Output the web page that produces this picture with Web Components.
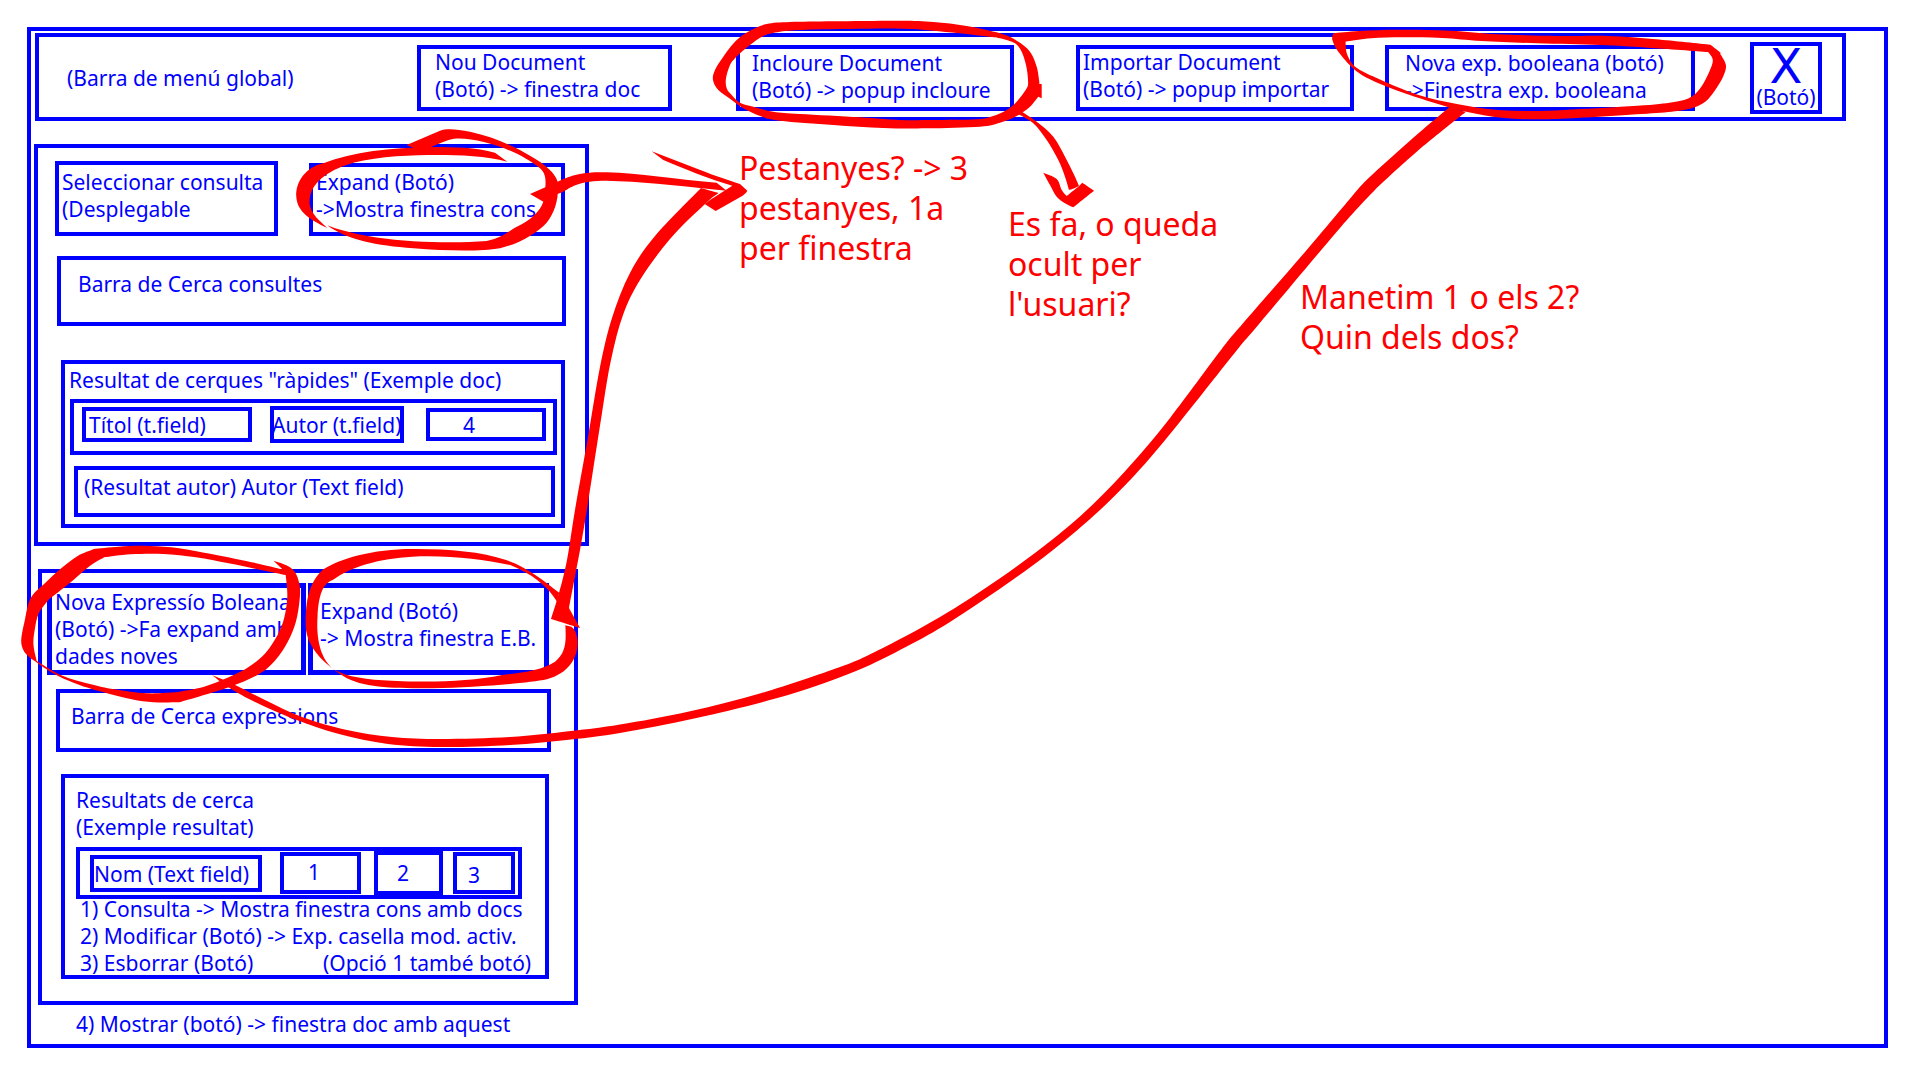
<!DOCTYPE html>
<html lang="ca">
<head>
<meta charset="utf-8">
<title>Esbós de la finestra principal</title>
<style>
  html { background: #fff; }
  body {
    position: relative;
    margin: 0;
    padding: 27px 32px 32px 27px;
    color: #00f;
    font: 21px/27px "Noto Sans", sans-serif;
  }
</style>
</head>
<body>
<wire-window></wire-window>
<ink-layer>
  <ink-note style="left:739px;top:148px">Pestanyes? -&gt; 3<br>pestanyes, 1a<br>per finestra</ink-note>
  <ink-note style="left:1008px;top:204px">Es fa, o queda<br>ocult per<br>l'usuari?</ink-note>
  <ink-note style="left:1300px;top:277px">Manetim 1 o els 2?<br>Quin dels dos?</ink-note>
</ink-layer>

<script>
const define = (name, css, html) => customElements.define(name, class extends HTMLElement {
  constructor() {
    super();
    this.attachShadow({ mode: 'open' }).innerHTML = `<style>*{box-sizing:border-box}${css}</style>${html}`;
  }
});

/* Button drawn as a plain outlined box, label at the top left */
define('wire-button', `
  :host { display: block; box-sizing: border-box; }
  button {
    display: flex; align-items: flex-start; width: 100%; height: 100%; margin: 0;
    padding: var(--pad, 0); border: var(--line, 4px) solid #00f; background: none;
    color: inherit; font: inherit; text-align: left; white-space: nowrap;
  }`,
  `<button type="button"><span><slot></slot></span></button>`);

/* Drop-down whose caption takes two lines */
define('wire-select', `
  :host { display: block; box-sizing: border-box; }
  label { display: block; position: relative; height: 100%; border: 4px solid #00f; padding: var(--pad, 0); white-space: nowrap; }
  select { position: absolute; inset: 0; width: 100%; height: 100%; border: 0; background: none; appearance: none; }`,
  `<label><slot></slot><select><option></option></select></label>`);

/* Text field: its value comes from the "value" attribute */
customElements.define('wire-field', class extends HTMLElement {
  constructor() {
    super();
    this.attachShadow({ mode: 'open' }).innerHTML = `<style>
      :host { display: block; box-sizing: border-box; }
      input {
        display: block; box-sizing: border-box; width: 100%; height: 100%; margin: 0; border: 0;
        padding: var(--pad, 0); outline: 4px solid #00f; outline-offset: -4px;
        background: none; color: inherit; font: inherit;
      }</style><input type="text">`;
    const input = this.shadowRoot.querySelector('input');
    input.value = this.getAttribute('value');
    input.setAttribute('aria-label', this.getAttribute('value'));
  }
});

define('wire-close', `
  :host { display: block; }
  button {
    display: flex; flex-direction: column; align-items: center; width: 100%; height: 100%;
    margin: 0; padding: 3px 0 0; border: 4px solid #00f; background: none; color: inherit; font: inherit; white-space: nowrap;
  }
  .x { font: 48px/35px "DejaVu Sans", sans-serif; }`,
  `<button type="button"><span class="x">X</span><span>(Botó)</span></button>`);

define('menu-bar', `
  :host {
    display: grid; align-items: center; box-sizing: border-box;
    grid-template-columns:
      minmax(0,378fr) minmax(0,255fr) minmax(0,64fr) minmax(0,278fr) minmax(0,62fr) minmax(0,278fr)
      minmax(0,31fr) minmax(0,310fr) minmax(0,55fr) minmax(0,72fr) minmax(0,20fr);
    padding: 5px 0 3px; border: 4px solid #00f;
  }
  .title { padding-left: 28px; white-space: nowrap; }
  wire-button { height: 66px; }
  wire-close { height: 72px; grid-column: 10; }`,
  `<span class="title">(Barra de menú global)</span>
   <wire-button style="grid-column:2;--pad:0 0 0 14px">Nou Document<br>(Botó) -&gt; finestra doc</wire-button>
   <wire-button style="grid-column:4;--pad:1px 0 0 12px">Incloure Document<br>(Botó) -&gt; popup incloure</wire-button>
   <wire-button style="grid-column:6;--pad:0 0 0 3px">Importar Document<br>(Botó) -&gt; popup importar</wire-button>
   <wire-button style="grid-column:8;--pad:1px 0 0 16px">Nova exp. booleana (botó)<br>-&gt;Finestra exp. booleana</wire-button>
   <wire-close></wire-close>`);

define('query-panel', `
  :host { display: block; box-sizing: border-box; width: 555px; border: 4px solid #00f; padding: 13px 0 14px 17px; }
  .top { display: flex; align-items: flex-end; gap: 31px; }
  .top wire-select { width: 223px; height: 75px; --pad: 4px 0 0 3px; }
  .top wire-button { width: 256px; height: 73px; --pad: 2px 0 0 3px; }
  .search { width: 509px; height: 70px; margin: 20px 0 0 2px; --pad: 14px 0 29px 21px; }
  .results { width: 504px; margin: 34px 0 0 6px; padding: 3px 0 7px 5px; border: 4px solid #00f; }
  .results p { margin: 0 0 0 -1px; }
  .row { display: flex; align-items: center; width: 487px; height: 56px; margin-top: 5px; padding: 3px 0 8px 8px; border: 4px solid #00f; }
  .author { width: 481px; height: 51px; margin: 11px 0 0 4px; --pad: 7px 0 17px 10px; }`,
  `<div class="top">
     <wire-select>Seleccionar consulta<br>(Desplegable</wire-select>
     <wire-button>Expand (Botó)<br>-&gt;Mostra finestra cons</wire-button>
   </div>
   <wire-field class="search" value="Barra de Cerca consultes"></wire-field>
   <div class="results">
     <p>Resultat de cerques "ràpides" (Exemple doc)</p>
     <div class="row">
       <wire-field style="width:170px;height:35px;--pad:0 0 0 7px" value="Títol (t.field)"></wire-field>
       <wire-field style="width:134px;height:37px;margin-left:18px;--pad:0 0 0 2px" value="Autor (t.field)"></wire-field>
       <wire-button style="width:120px;height:33px;margin-left:22px;--pad:0 0 0 33px">4</wire-button>
     </div>
     <wire-field class="author" value="(Resultat autor) Autor (Text field)"></wire-field>
   </div>`);

define('expression-panel', `
  :host { display: block; box-sizing: border-box; width: 540px; border: 4px solid #00f; padding: 10px 0 22px 5px; }
  .top { display: flex; gap: 2px; --line: 5px; }
  .top wire-button { height: 92px; }
  .search { width: 495px; height: 63px; margin: 14px 0 0 9px; --pad: 13px 0 23px 15px; }
  .results { width: 488px; margin: 22px 0 0 14px; padding: 9px 0 0 11px; border: 4px solid #00f; }
  .results p { margin: 0; }
  .row { display: flex; align-items: center; width: 446px; height: 52px; margin-top: 6px; padding-left: 10px; border: 4px solid #00f; }
  ol { margin: -3px 0 -2px 4px; padding: 0; list-style: none; white-space: nowrap; }
  ol span { display: inline-block; width: 243px; }`,
  `<div class="top">
     <wire-button style="width:259px;--pad:1px 0 0 3px">Nova Expressío Boleana<br>(Botó) -&gt;Fa expand amb<br>dades noves</wire-button>
     <wire-button style="width:241px;--pad:10px 0 0 7px">Expand (Botó)<br>-&gt; Mostra finestra E.B.</wire-button>
   </div>
   <wire-field class="search" value="Barra de Cerca expressions"></wire-field>
   <div class="results">
     <p>Resultats de cerca<br>(Exemple resultat)</p>
     <div class="row">
       <wire-field style="width:172px;height:37px;--pad:1px 0 0 4px" value="Nom (Text field)"></wire-field>
       <wire-button style="width:81px;height:42px;margin-left:18px;--pad:3px 0 0 24px">1</wire-button>
       <wire-button style="width:69px;height:44px;margin-left:13px;--pad:5px 0 0 19px">2</wire-button>
       <wire-button style="width:62px;height:42px;margin-left:10px;--pad:6px 0 0 11px">3</wire-button>
     </div>
     <ol>
       <li>1) Consulta -&gt; Mostra finestra cons amb docs</li>
       <li>2) Modificar (Botó) -&gt; Exp. casella mod. activ.</li>
       <li><span>3) Esborrar (Botó)</span>(Opció 1 també botó)</li>
     </ol>
   </div>`);

define('wire-window', `
  :host { display: block; box-sizing: border-box; border: 4px solid #00f; padding: 2px 38px 6px 4px; }
  query-panel { margin: 23px 0 0 -1px; }
  expression-panel { margin: 23px 0 0 3px; }
  p { margin: 6px 0 0 41px; }`,
  `<menu-bar></menu-bar>
   <main>
     <query-panel></query-panel>
     <expression-panel></expression-panel>
     <p>4) Mostrar (botó) -&gt; finestra doc amb aquest</p>
   </main>`);

define('ink-note', `
  :host { position: absolute; color: #f00; font-size: 32px; line-height: 40px; white-space: nowrap; }`,
  `<slot></slot>`);

/* Hand-drawn marks. Each outline is [x0, y0, sx, sy, points]; "|" marks a sharp corner, ";" a new contour. */
const outlines = [
  /* ring round "Incloure Document" */
  [700, 10, 3, 3, '1018,215 1010,170 990,125 950,92 900,70 800,48 700,36 600,32 400,34 270,36 200,42 150,62 110,90 70,140 45,180 39,210 55,240 95,270 130,295 180,318 240,332 400,345 550,354 680,355 840,350 900,338 950,318 990,290 1015,260|1025,265|1025,222|1018,222;120,130 150,105 190,78 240,65 320,59 450,57 600,56 700,62 850,78 900,85 945,100 965,125 978,165 984,210 980,235 950,275 920,300 880,318 830,328 700,330 600,330 480,322 300,312 220,305 160,290 120,278 95,255 80,235 78,205 90,165 105,145 120,130'],
  [700, 10, 3, 3, '950,300|965,305 1010,335 1060,380 1095,440 1120,490 1137,528|1115,538|1107,540|1095,500 1075,450 1040,390 1000,340 955,312'],
  [700, 10, 3, 3, '1030,488|1070,507 1085,540 1100,558|1135,530|1147,518|1182,542|1120,592|1095,580 1070,560 1050,525 1030,488'],
  /* ring round "Nova exp. booleana" */
  [1300, 0, 2.529, 3, '85,100|150,93 250,89 380,92 500,103 650,108 780,108 900,118 1038,134|1068,162|1062,160|1077,195 1070,230 1050,270 1025,305 990,325 940,335 850,343 700,354 600,358 510,353 420,335 330,305 230,265 150,220 100,160 82,120 85,100;115,125|180,115 260,112 360,114 460,123 600,130 760,135 880,143 1032,156|1044,180 1035,215 1015,260 990,290 950,305 870,316 700,328 600,333 500,330 400,313 300,285 215,245 145,205 120,165 115,125'],
  /* long stroke from "Nova Expressío" up to "Nova exp. booleana" */
  [0, 0, 1, 1, '212,675 233,684 265,700 302,717 347,730 392,737 441,739 510,737 571,731 620,724.5 689,711.5 761.6,693 840,667 876.7,651 940,617 1000,578.3 1053,539 1093.3,504 1133.3,462 1171,416.7 1221,350 1243,323.3 1306.7,250 1360,186.7|1373,174 1413,138 1450,106.7|1465.7,112|1416.7,151.7 1376.7,188|1340,228 1256.7,326.7 1237,350 1180,421.7 1140,469.3 1100,510 1053,550 1006.7,584 950,622 906.7,646.5 856,671 788,695 696.5,718 620,733 571,739.5 510,745 441,747 388,744 339,734 294,719 253,701 228,687 212,675'],
  /* stroke from the lower "Expand" up to the first note */
  [0, 0, 1, 1, '701,188|718.5,193|705,204 670,239 640,280 623,315 611,360 602,413 588,503 580,550 569,608|580,628|551,619|559,593 567,560 575,510 588,437 600,367 612,318 630,273 655,236 701,188'],
  /* ring round "Nova Expressío Boleana" */
  [0, 530, 2.45, 3, '670,92|700,105 722,125 734,165 734,210 725,275 705,335 675,390 635,432 560,472 440,517|350,514 240,482 180,458 130,430 75,385|58,362 52,330 60,275 75,205 110,160 150,115 190,78 230,57|290,50 350,47 420,52 500,68 600,92 692,118;700,135|640,120 560,100 480,82 400,72 320,73 255,82|220,108 170,160 120,208|95,250 85,300 82,345 90,393|150,436 220,462 280,478 360,490 430,487|500,470 560,442 610,410 650,370 680,315 696,265 704,200 700,135']
];

/* Rounded curve through all points between two corners */
const num = n => +n.toFixed(1);
const trace = ([ox, oy, sx, sy, src]) => src.split(';').map(contour => {
  let d = '', last = null;
  for (const run of contour.split('|')) {
    let p = run.trim().split(' ').map(s => { const [x, y] = s.split(','); return [ox + x / sx, oy + y / sy]; });
    if (last) p = [last, ...p]; else d = `M${num(p[0][0])},${num(p[0][1])}`;
    for (let i = 0; i < p.length - 1; i++) {
      const a = p[i - 1] || p[i], b = p[i], c = p[i + 1], e = p[i + 2] || c;
      d += `C${num(b[0] + (c[0] - a[0]) / 6)},${num(b[1] + (c[1] - a[1]) / 6)} ${num(c[0] - (e[0] - b[0]) / 6)},${num(c[1] - (e[1] - b[1]) / 6)} ${num(c[0])},${num(c[1])}`;
    }
    last = p[p.length - 1];
  }
  return d + 'Z';
}).join('');

define('ink-layer', `
  :host { position: absolute; left: 0; top: 0; }
  svg { display: block; pointer-events: none; fill: #f00; fill-rule: evenodd; }`,
  `<svg width="1920" height="1080" viewBox="0 0 1920 1080" aria-hidden="true">
    ${outlines.map(o => `<path d="${trace(o)}"/>`).join('')}
    <g transform="translate(280 110) scale(.33333)">
      <path d="M682,155L645,128C590,112 520,111 455,111C330,113 220,125 130,160C80,170 45,215 49,262C52,305 90,330 142,354C108,325 85,300 89,268C94,210 160,175 220,158C300,138 400,135 470,135C540,135 620,138 682,155Z"/>
      <path d="M380,105L480,62C500,55 530,57 570,65C640,80 700,108 750,137C800,165 825,190 833,215C837,255 830,300 800,338C770,370 720,400 660,415C600,425 500,423 400,415C290,407 200,390 142,346C200,370 300,388 400,394C480,398 560,398 620,393C670,382 690,360 715,348C750,330 780,305 790,275L750,252L796,232C798,205 796,190 780,175C720,125 600,80 522,86C500,90 480,100 455,110L420,122Z"/>
    </g>
    <g transform="translate(540 120) scale(.33333)">
      <path d="M40,190L53,185C100,160 150,155 200,157C300,160 400,178 530,188L560,212L515,208C400,195 300,184 200,182C120,182 95,200 75,212C60,220 40,226 20,230Z"/>
      <path d="M335,94L475,148C530,170 570,182 600,192L622,212Q617,222 600,232L527,273L494,252L510,240L577,197C500,175 430,145 370,120Z"/>
    </g>
    <g transform="translate(0 530) scale(.40816 .33333)">
      <path d="M1370,188C1330,150 1290,110 1240,90C1180,65 1100,57 1020,57C920,55 830,85 790,120C755,160 748,220 749,290C752,350 790,400 850,445C900,475 970,475 1060,475C1170,472 1290,460 1340,448C1395,430 1418,380 1415,330Q1412,300 1400,290L1385,286C1388,340 1385,370 1360,395C1330,420 1280,428 1230,435C1150,455 1050,458 960,452C900,450 850,440 820,420C780,385 775,310 778,260C780,200 790,160 815,150C860,110 930,85 1010,80C1100,75 1180,88 1250,105C1300,130 1340,165 1365,215Z"/>
    </g>
  </svg>
  <slot></slot>`);
</script>
</body>
</html>
